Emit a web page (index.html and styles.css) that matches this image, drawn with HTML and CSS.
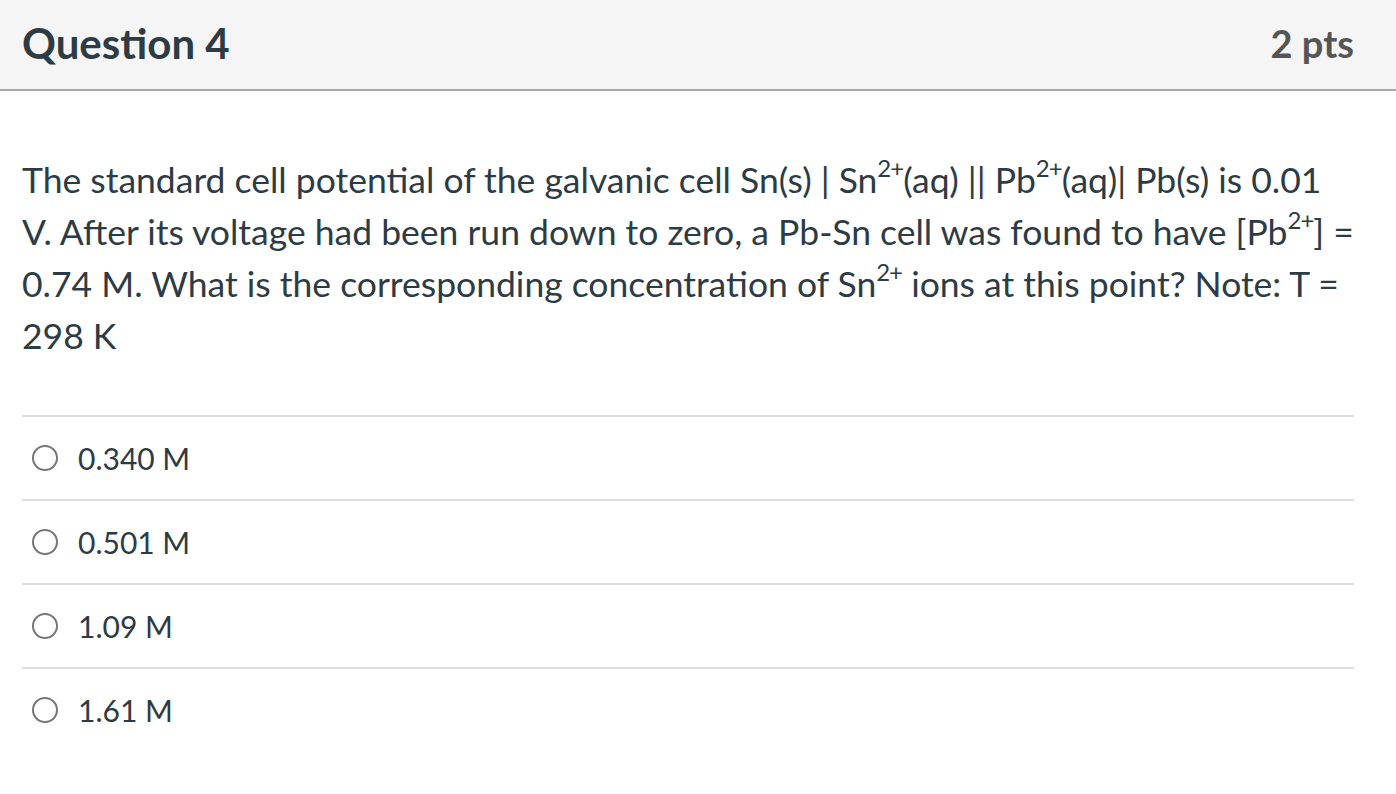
FILE: index.html
```html
<!DOCTYPE html>
<html>
<head>
<meta charset="utf-8">
<link rel="stylesheet" href="styles.css">
</head>
<body>
<div class="question">
  <div class="header">
    <h2 class="title">Question 4</h2>
    <div class="pts">2 pts</div>
  </div>
  <div class="content">
    <p class="text">The standard cell potential of the galvanic cell Sn(s) | Sn<sup>2+</sup>(aq) || Pb<sup>2+</sup>(aq)| Pb(s) is 0.01 V. After its voltage had been run down to zero, a Pb-Sn cell was found to have [Pb<sup>2+</sup>] = 0.74 M. What is the corresponding concentration of Sn<sup>2+</sup> ions at this point? Note: T = 298 K</p>
    <div class="answers">
      <div class="answer"><span class="radio"></span><span class="label">0.340 M</span></div>
      <div class="answer"><span class="radio"></span><span class="label">0.501 M</span></div>
      <div class="answer"><span class="radio"></span><span class="label">1.09 M</span></div>
      <div class="answer"><span class="radio"></span><span class="label">1.61 M</span></div>
    </div>
  </div>
</div>
</body>
</html>
```
FILE: styles.css
```css
html, body {
  margin: 0;
  padding: 0;
  background: #ffffff;
  font-family: Lato, "Liberation Sans", sans-serif;
  color: #2d3b45;
}
.header {
  height: 89px;
  background: #f5f5f5;
  border-bottom: 2px solid #aaaaaa;
  display: flex;
  align-items: center;
  justify-content: space-between;
  padding: 0 42px 0 22px;
}
.title {
  margin: 0;
  font-size: 42px;
  font-weight: 700;
  color: #2d3b45;
  padding-bottom: 4px;
}
.pts {
  font-size: 38px;
  font-weight: 700;
  color: #555555;
  padding-bottom: 4px;
}
.content {
  padding: 0 42px 0 22px;
}
.text {
  margin: 0;
  padding-top: 63px;
  font-size: 35.5px;
  line-height: 52px;
}
.text sup {
  font-size: 24px;
  line-height: 0;
  letter-spacing: -1px;
  vertical-align: 16px;
}
.answers {
  margin-top: 53px;
}
.answer {
  border-top: 2px solid #dddddd;
  height: 82px;
  display: flex;
  align-items: center;
  gap: 20px;
  padding-left: 10px;
}
.radio {
  width: 22px;
  height: 22px;
  border: 2px solid #777777;
  border-radius: 50%;
  flex: none;
}
.label {
  font-size: 30px;
}
```
